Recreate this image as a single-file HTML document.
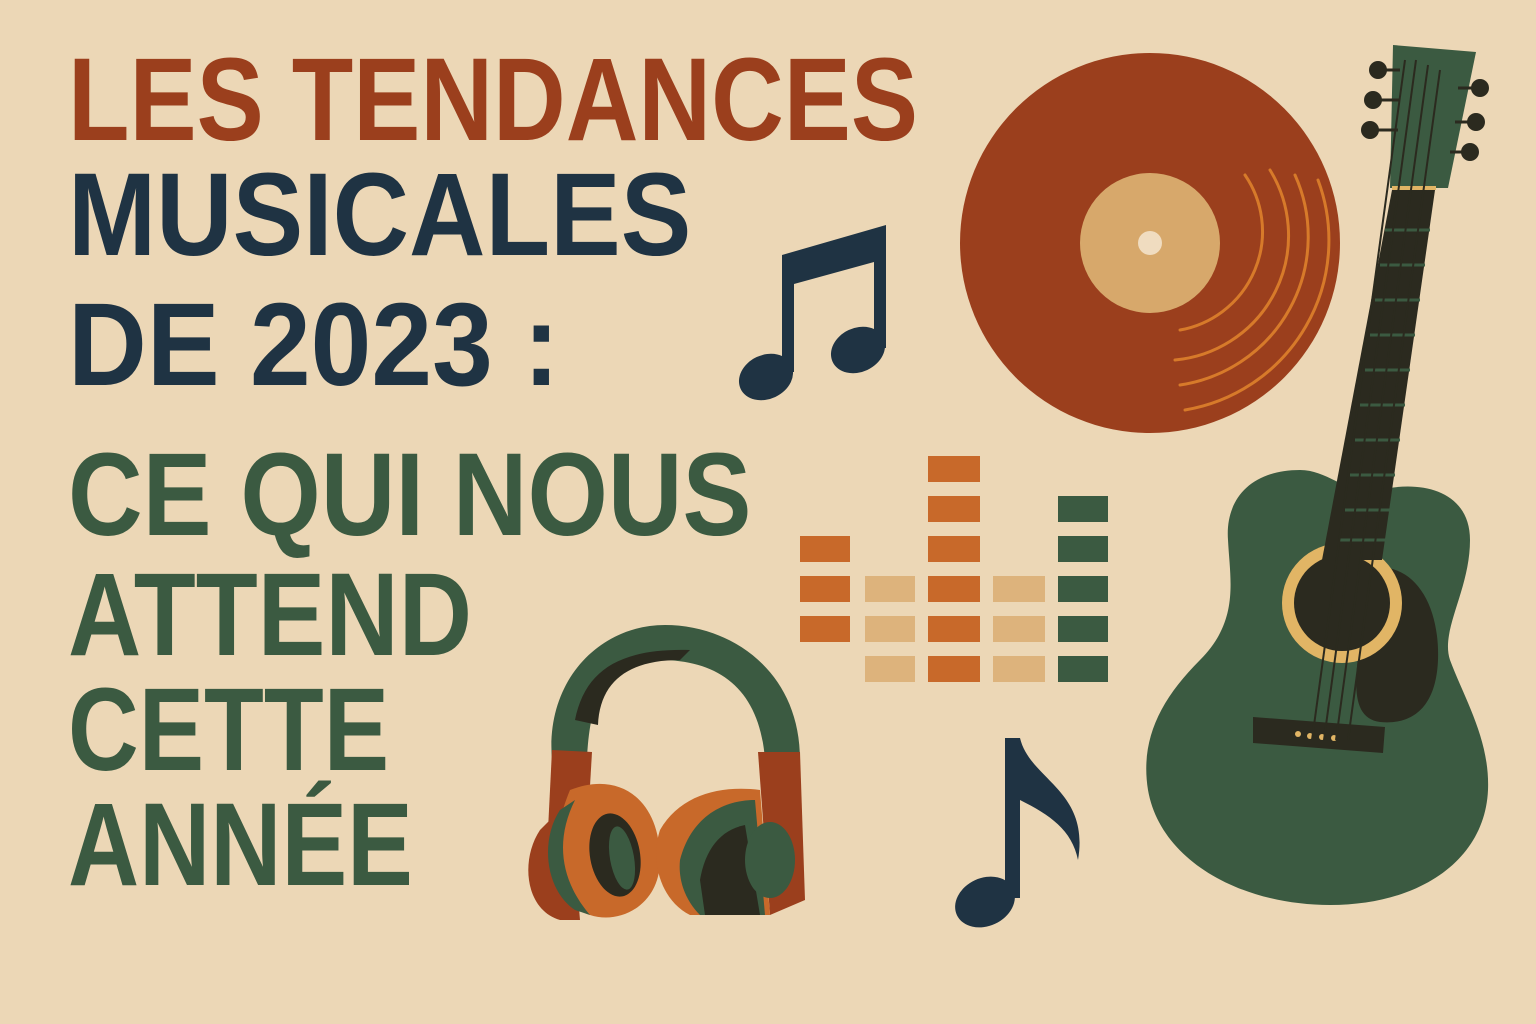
<!DOCTYPE html>
<html><head><meta charset="utf-8"><style>
html,body{margin:0;padding:0}
body{width:1536px;height:1024px;background:#ecd7b6;position:relative;overflow:hidden;font-family:"Liberation Sans",sans-serif;font-weight:bold}
.t{position:absolute;left:68px;font-size:118px;line-height:118px;white-space:nowrap;transform-origin:left top}
.r{color:#9b3f1d}.n{color:#1f3343}.g{color:#3b5a41}
svg{position:absolute;left:0;top:0}
</style></head><body>
<div class="t r" style="top:41px;transform:scaleX(0.853)">LES TENDANCES</div>
<div class="t n" style="top:156px;transform:scaleX(0.897)">MUSICALES</div>
<div class="t n" style="top:286px;transform:scaleX(0.925)">DE 2023 :</div>
<div class="t g" style="top:436px;transform:scaleX(0.876)">CE QUI NOUS</div>
<div class="t g" style="top:556px;transform:scaleX(0.86)">ATTEND</div>
<div class="t g" style="top:671px;transform:scaleX(0.83)">CETTE</div>
<div class="t g" style="top:786px;transform:scaleX(0.835)">ANNÉE</div>
<svg width="1536" height="1024" viewBox="0 0 1536 1024">
<circle cx="1150" cy="243" r="190" fill="#9b3f1d"/>
<circle cx="1150" cy="243" r="70" fill="#d7a86b"/>
<circle cx="1150" cy="243" r="12" fill="#f0dcc0"/>
<g fill="none" stroke="#d77a2a" stroke-width="3" stroke-linecap="round">
<path d="M1245 175 A100 100 0 0 1 1180 330"/>
<path d="M1270 170 A125 125 0 0 1 1175 360"/>
<path d="M1295 175 A150 150 0 0 1 1180 385"/>
<path d="M1318 180 A172 172 0 0 1 1185 410"/>
</g>
<path d="M1300 470 C1250 470 1225 500 1228 540 C1230 580 1240 620 1200 660 C1160 700 1140 740 1148 790 C1160 860 1240 905 1330 905 C1420 905 1485 860 1488 790 C1490 740 1465 700 1450 660 C1440 630 1470 590 1470 540 C1470 490 1420 480 1380 490 C1350 498 1330 470 1300 470Z" fill="#3b5a41"/>
<path d="M1360 570 C1410 555 1440 600 1438 660 C1436 710 1410 725 1380 722 C1350 718 1355 680 1360 640Z" fill="#2b2a1f"/>
<circle cx="1342" cy="603" r="60" fill="#e1b565"/>
<circle cx="1342" cy="603" r="48" fill="#2b2a1f"/>
<path d="M1253 717 L1385 727 L1383 753 L1253 743Z" fill="#2b2a1f"/>
<g fill="#e1b565"><circle cx="1298" cy="734" r="3"/><circle cx="1310" cy="736" r="3"/><circle cx="1322" cy="737" r="3"/><circle cx="1334" cy="738" r="3"/></g>
<path d="M1392 190 L1435 190 L1382 560 L1322 560Z" fill="#2b2a1f"/>
<g stroke="#3b5a41" stroke-width="3">
<line x1="1385" y1="230" x2="1430" y2="230"/><line x1="1380" y1="265" x2="1425" y2="265"/><line x1="1375" y1="300" x2="1420" y2="300"/><line x1="1370" y1="335" x2="1415" y2="335"/><line x1="1365" y1="370" x2="1410" y2="370"/><line x1="1360" y1="405" x2="1405" y2="405"/><line x1="1355" y1="440" x2="1400" y2="440"/><line x1="1350" y1="475" x2="1395" y2="475"/><line x1="1345" y1="510" x2="1390" y2="510"/><line x1="1340" y1="540" x2="1386" y2="540"/>
</g>
<path d="M1393 45 L1476 52 L1448 188 L1390 188Z" fill="#3b5a41"/>
<g stroke="#2b2a1f" stroke-width="3"><line x1="1378" y1="70" x2="1400" y2="70"/><line x1="1373" y1="100" x2="1400" y2="100"/><line x1="1370" y1="130" x2="1398" y2="130"/><line x1="1458" y1="88" x2="1480" y2="88"/><line x1="1455" y1="122" x2="1476" y2="122"/><line x1="1450" y1="152" x2="1470" y2="152"/></g>
<g fill="#2b2a1f"><circle cx="1378" cy="70" r="9"/><circle cx="1373" cy="100" r="9"/><circle cx="1370" cy="130" r="9"/><circle cx="1480" cy="88" r="9"/><circle cx="1476" cy="122" r="9"/><circle cx="1470" cy="152" r="9"/></g>
<rect x="1392" y="186" width="44" height="4" fill="#e1b565"/>
<g stroke="#2b2a1f" stroke-width="2"><line x1="1405" y1="60" x2="1312" y2="740"/><line x1="1416" y1="60" x2="1324" y2="740"/><line x1="1428" y1="65" x2="1336" y2="740"/><line x1="1440" y1="70" x2="1348" y2="740"/></g>
<g fill="#c8692a"><rect x="800" y="536" width="50" height="26"/><rect x="800" y="576" width="50" height="26"/><rect x="800" y="616" width="50" height="26"/>
<rect x="928" y="456" width="52" height="26"/><rect x="928" y="496" width="52" height="26"/><rect x="928" y="536" width="52" height="26"/><rect x="928" y="576" width="52" height="26"/><rect x="928" y="616" width="52" height="26"/><rect x="928" y="656" width="52" height="26"/></g>
<g fill="#ddb37c"><rect x="865" y="576" width="50" height="26"/><rect x="865" y="616" width="50" height="26"/><rect x="865" y="656" width="50" height="26"/>
<rect x="993" y="576" width="52" height="26"/><rect x="993" y="616" width="52" height="26"/><rect x="993" y="656" width="52" height="26"/></g>
<g fill="#3b5a41"><rect x="1058" y="496" width="50" height="26"/><rect x="1058" y="536" width="50" height="26"/><rect x="1058" y="576" width="50" height="26"/><rect x="1058" y="616" width="50" height="26"/><rect x="1058" y="656" width="50" height="26"/></g>
<g fill="#1f3343">
<ellipse cx="766" cy="377" rx="28" ry="22" transform="rotate(-25 766 377)"/>
<ellipse cx="858" cy="350" rx="28" ry="22" transform="rotate(-25 858 350)"/>
<path d="M782 372 L782 255 L886 225 L886 348 L874 348 L874 262 L794 284 L794 372Z"/>
<ellipse cx="985" cy="902" rx="31" ry="24" transform="rotate(-25 985 902)"/>
<path d="M1005 898 L1005 738 L1020 738 C1030 780 1090 790 1078 860 C1072 830 1050 815 1020 800 L1020 898Z"/>
</g>
<path d="M552 760 C545 680 600 625 665 625 C730 625 800 670 800 760 L765 760 C760 690 720 660 660 660 C610 660 590 690 587 760Z" fill="#3b5a41"/>
<path d="M575 720 C585 670 620 648 690 650 L680 660 C630 660 600 680 598 725Z" fill="#2b2a1f"/>
<path d="M552 750 L592 752 L588 820 L548 830Z" fill="#9b3f1d"/>
<path d="M758 752 L800 752 L805 900 L770 915Z" fill="#9b3f1d"/>
<path d="M540 830 C520 860 525 910 560 920 L580 920 L570 800Z" fill="#9b3f1d"/>
<path d="M570 790 C620 770 660 800 660 860 C660 905 620 925 590 915 C555 905 545 850 570 790Z" fill="#c8692a"/>
<path d="M560 810 C540 840 545 890 575 910 L590 915 C560 880 555 840 575 800Z" fill="#3b5a41"/>
<ellipse cx="615" cy="855" rx="25" ry="42" transform="rotate(-10 615 855)" fill="#2b2a1f"/>
<ellipse cx="622" cy="858" rx="12" ry="32" transform="rotate(-10 622 858)" fill="#3b5a41"/>
<path d="M660 830 C680 795 720 785 760 790 L770 915 L690 915 C660 900 650 860 660 830Z" fill="#c8692a"/>
<path d="M680 860 C690 820 720 800 755 800 L765 915 L700 915 C685 900 678 880 680 860Z" fill="#3b5a41"/>
<path d="M700 880 C705 850 720 830 745 825 L760 915 L705 915Z" fill="#2b2a1f"/>
<ellipse cx="770" cy="860" rx="25" ry="38" fill="#3b5a41"/>
</svg>
</body></html>
